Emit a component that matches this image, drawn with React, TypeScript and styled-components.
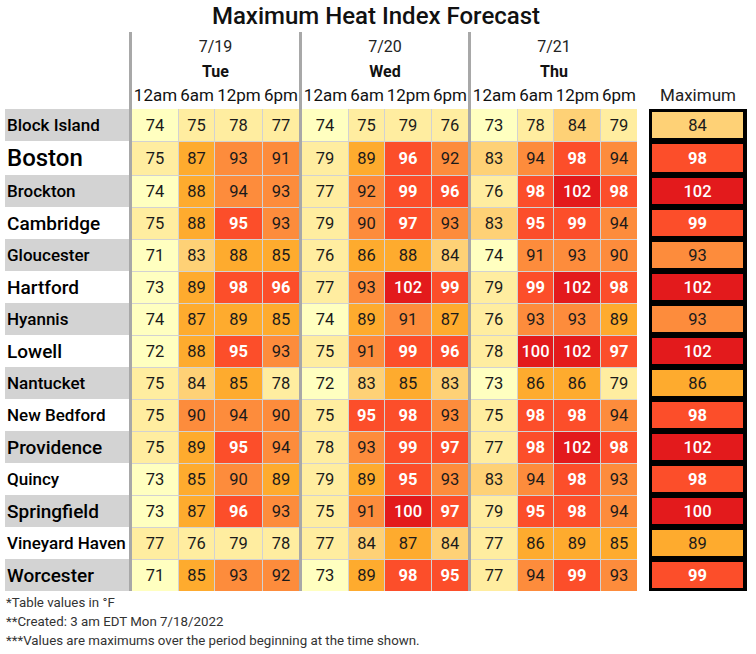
import styled, { createGlobalStyle } from 'styled-components'

const GlobalStyle = createGlobalStyle`
  body {
    margin: 0;
    background: #fff;
    color: #111;
    font-family: Roboto, "Liberation Sans", sans-serif;
  }
`

// label | Tue | Wed | Thu | Maximum
const COLUMNS = '124px 170px 169px 169px 110px'

const days = [
  { date: '7/19', name: 'Tue' },
  { date: '7/20', name: 'Wed' },
  { date: '7/21', name: 'Thu' },
]
const times = ['12am', '6am', '12pm', '6pm']

type City = { name: string; size: 'sm' | 'md' | 'lg'; values: number[]; max: number }

const cities: City[] = [
  { name: 'Block Island', size: 'sm', values: [74, 75, 78, 77, 74, 75, 79, 76, 73, 78, 84, 79], max: 84 },
  { name: 'Boston', size: 'lg', values: [75, 87, 93, 91, 79, 89, 96, 92, 83, 94, 98, 94], max: 98 },
  { name: 'Brockton', size: 'sm', values: [74, 88, 94, 93, 77, 92, 99, 96, 76, 98, 102, 98], max: 102 },
  { name: 'Cambridge', size: 'md', values: [75, 88, 95, 93, 79, 90, 97, 93, 83, 95, 99, 94], max: 99 },
  { name: 'Gloucester', size: 'sm', values: [71, 83, 88, 85, 76, 86, 88, 84, 74, 91, 93, 90], max: 93 },
  { name: 'Hartford', size: 'md', values: [73, 89, 98, 96, 77, 93, 102, 99, 79, 99, 102, 98], max: 102 },
  { name: 'Hyannis', size: 'sm', values: [74, 87, 89, 85, 74, 89, 91, 87, 76, 93, 93, 89], max: 93 },
  { name: 'Lowell', size: 'md', values: [72, 88, 95, 93, 75, 91, 99, 96, 78, 100, 102, 97], max: 102 },
  { name: 'Nantucket', size: 'sm', values: [75, 84, 85, 78, 72, 83, 85, 83, 73, 86, 86, 79], max: 86 },
  { name: 'New Bedford', size: 'sm', values: [75, 90, 94, 90, 75, 95, 98, 93, 75, 98, 98, 94], max: 98 },
  { name: 'Providence', size: 'md', values: [75, 89, 95, 94, 78, 93, 99, 97, 77, 98, 102, 98], max: 102 },
  { name: 'Quincy', size: 'sm', values: [73, 85, 90, 89, 79, 89, 95, 93, 83, 94, 98, 93], max: 98 },
  { name: 'Springfield', size: 'md', values: [73, 87, 96, 93, 75, 91, 100, 97, 79, 95, 98, 94], max: 100 },
  { name: 'Vineyard Haven', size: 'sm', values: [77, 76, 79, 78, 77, 84, 87, 84, 77, 86, 89, 85], max: 89 },
  { name: 'Worcester', size: 'md', values: [71, 85, 93, 92, 73, 89, 98, 95, 77, 94, 99, 93], max: 99 },
]

const labelSizes = { sm: 17, md: 19, lg: 24 }

function heatColor(v: number) {
  if (v >= 100) return '#e31a1c'
  if (v >= 95) return '#fc4e2a'
  if (v >= 90) return '#fd8c3c'
  if (v >= 85) return '#feab2e'
  if (v >= 80) return '#fed176'
  if (v >= 75) return '#ffeda0'
  return '#ffffc0'
}

const Page = styled.div`
  width: 752px;
`

const Title = styled.h1`
  margin: 0;
  height: 32px;
  font-size: 24px;
  line-height: 32px;
  font-weight: 500;
  text-align: center;
  color: #111;
`

const Table = styled.div`
  margin-left: 5px;
`

const HeaderRow = styled.div`
  display: grid;
  grid-template-columns: ${COLUMNS};
`

const DayHead = styled.div`
  border-left: 3px solid #a8a8a8;
  display: flex;
  flex-direction: column;
`

const DateText = styled.div`
  height: 29px;
  font-size: 16px;
  line-height: 29px;
  text-align: center;
  color: #222;
`

const DayName = styled.div`
  height: 21px;
  font-size: 16px;
  line-height: 21px;
  font-weight: 700;
  text-align: center;
  color: #111;
`

const TimeRow = styled.div`
  display: grid;
  grid-template-columns: 47px 36px 1fr 36px;
`

const TimeText = styled.div`
  height: 27px;
  font-size: 17px;
  line-height: 27px;
  text-align: center;
  white-space: nowrap;
  color: #111;
`

const MaxHead = styled.div`
  margin-left: 12px;
  display: flex;
  align-items: flex-end;
  justify-content: center;
  height: 77px;
  font-size: 17px;
  line-height: 27px;
  color: #222;
`

const Row = styled.div<{ $tall: boolean }>`
  display: grid;
  grid-template-columns: ${COLUMNS};
  height: ${p => (p.$tall ? 34 : 32)}px;
`

const CityLabel = styled.div<{ $shade: boolean; $size: number }>`
  display: flex;
  align-items: center;
  padding-left: 2px;
  background: ${p => (p.$shade ? '#d3d3d3' : '#fff')};
  font-size: ${p => p.$size}px;
  font-weight: 500;
  white-space: nowrap;
  color: #000;
`

const DayCells = styled.div`
  display: grid;
  grid-template-columns: 47px 36px 1fr 36px;
  border-left: 3px solid #a8a8a8;
`

const ValueCell = styled.div<{ $bg: string; $top: boolean; $hot: number }>`
  display: flex;
  align-items: center;
  justify-content: center;
  background: ${p => p.$bg};
  border-top: ${p => (p.$top ? '1px solid #d2d2d2' : 'none')};
  border-right: 1px solid #d2d2d2;
  font-size: 16.5px;
  font-weight: ${p => (p.$hot === 2 ? 500 : p.$hot === 1 ? 700 : 400)};
  color: ${p => (p.$hot ? '#fff' : '#1a1a1a')};

  &:last-child {
    border-right: none;
  }
`

const MaxCell = styled.div<{ $bg: string; $hot: number }>`
  margin-left: 12px;
  display: flex;
  align-items: center;
  justify-content: center;
  border: 3px solid #000;
  border-right-width: 4px;
  background: ${p => p.$bg};
  font-size: 16.5px;
  font-weight: ${p => (p.$hot === 2 ? 500 : p.$hot === 1 ? 700 : 400)};
  color: ${p => (p.$hot ? '#fff' : '#1a1a1a')};
`

const Notes = styled.div`
  padding: 2px 0 0 6px;
  font-size: 13.3px;
  line-height: 19px;
  color: #333;
`

const hotLevel = (v: number) => (v >= 100 ? 2 : v >= 95 ? 1 : 0)

export default function App() {
  return (
    <Page>
      <GlobalStyle />
      <Title>Maximum Heat Index Forecast</Title>
      <Table>
        <HeaderRow>
          <div />
          {days.map(day => (
            <DayHead key={day.date}>
              <DateText>{day.date}</DateText>
              <DayName>{day.name}</DayName>
              <TimeRow>
                {times.map(t => <TimeText key={t}>{t}</TimeText>)}
              </TimeRow>
            </DayHead>
          ))}
          <MaxHead>Maximum</MaxHead>
        </HeaderRow>
        {cities.map((city, i) => (
          <Row key={city.name} $tall={city.size === 'lg'}>
            <CityLabel $shade={i % 2 === 0} $size={labelSizes[city.size]}>{city.name}</CityLabel>
            {days.map((day, d) => (
              <DayCells key={day.date}>
                {city.values.slice(d * 4, d * 4 + 4).map((v, j) => (
                  <ValueCell key={j} $bg={heatColor(v)} $top={i > 0} $hot={hotLevel(v)}>{v}</ValueCell>
                ))}
              </DayCells>
            ))}
            <MaxCell $bg={heatColor(city.max)} $hot={hotLevel(city.max)}>{city.max}</MaxCell>
          </Row>
        ))}
      </Table>
      <Notes>
        <div>*Table values in °F</div>
        <div>**Created: 3 am EDT Mon 7/18/2022</div>
        <div>***Values are maximums over the period beginning at the time shown.</div>
      </Notes>
    </Page>
  )
}
